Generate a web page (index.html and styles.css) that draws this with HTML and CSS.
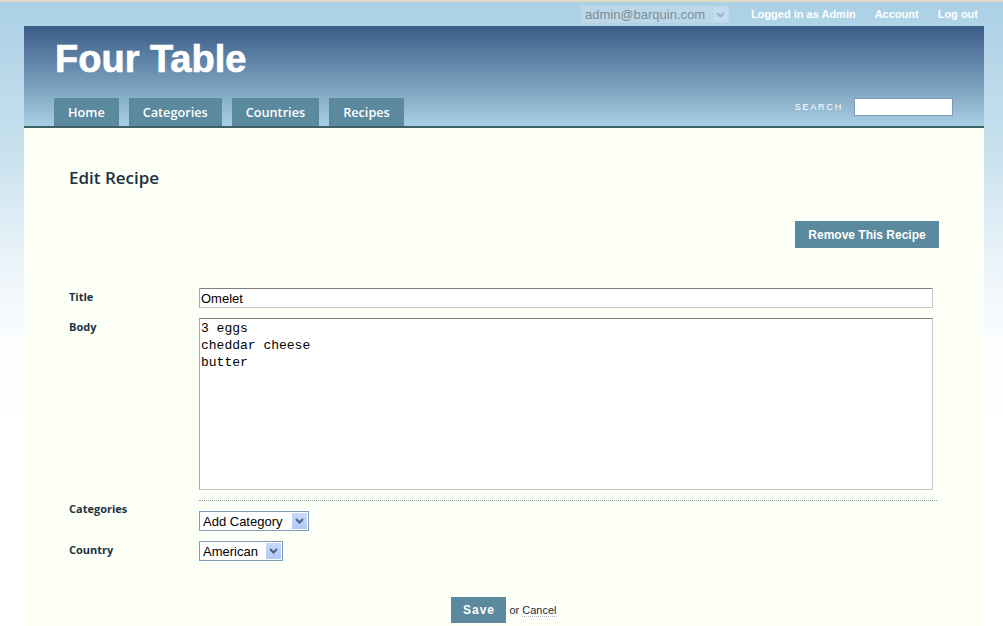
FILE: index.html
```html
<!DOCTYPE html>
<html>
<head>
<meta charset="utf-8">
<title>Four Table - Edit Recipe</title>
<link rel="stylesheet" href="styles.css">
</head>
<body>
<div class="page">
  <div class="topbar">
    <div class="select-wrap user-select">
      <select class="user-choice"><option>admin@barquin.com</option></select>
      <span class="arrow"><svg width="9" height="6" viewBox="0 0 9 6"><path d="M1 1 L4.5 4.5 L8 1" fill="none" stroke="#9fb3c8" stroke-width="2"/></svg></span>
    </div>
    <a class="toplink" href="#">Logged in as Admin</a>
    <a class="toplink" href="#">Account</a>
    <a class="toplink" href="#">Log out</a>
  </div>
  <div class="header">
    <h1 class="logo">Four Table</h1>
    <div class="navrow">
      <ul class="nav">
        <li><a href="#">Home</a></li>
        <li><a href="#">Categories</a></li>
        <li><a href="#">Countries</a></li>
        <li><a href="#">Recipes</a></li>
      </ul>
      <form class="search">
        <label class="search-label">SEARCH</label>
        <input class="search-input" type="text">
      </form>
    </div>
  </div>
  <div class="content">
    <h2 class="title">Edit Recipe</h2>
    <div class="actions">
      <button class="btn btn-remove">Remove This Recipe</button>
    </div>
    <form class="recipe-form">
      <div class="row">
        <label class="label">Title</label>
        <input class="text-input" type="text" value="Omelet">
      </div>
      <div class="row">
        <label class="label">Body</label>
        <textarea class="textarea">3 eggs
cheddar cheese
butter</textarea>
      </div>
      <div class="row row-sep">
        <label class="label">Categories</label>
        <div class="field">
          <div class="select-wrap form-select">
            <select class="choice cat"><option>Add Category</option></select>
            <span class="arrow"><svg width="9" height="6" viewBox="0 0 9 6"><path d="M1 1 L4.5 4.5 L8 1" fill="none" stroke="#4d6185" stroke-width="2"/></svg></span>
          </div>
        </div>
      </div>
      <div class="row row-country">
        <label class="label">Country</label>
        <div class="field">
          <div class="select-wrap form-select">
            <select class="choice country"><option>American</option></select>
            <span class="arrow"><svg width="9" height="6" viewBox="0 0 9 6"><path d="M1 1 L4.5 4.5 L8 1" fill="none" stroke="#4d6185" stroke-width="2"/></svg></span>
          </div>
        </div>
      </div>
      <div class="submit">
        <button class="btn btn-save">Save</button>
        <span class="or">or</span>
        <a class="cancel" href="#">Cancel</a>
      </div>
    </form>
  </div>
</div>
</body>
</html>
```

FILE: styles.css
```css
html, body {
  margin: 0;
  padding: 0;
}
body {
  border-top: 2px solid #e2dbc4;
  background: linear-gradient(to bottom, #aad0e5 0px, #c8e1ee 150px, #eaf3f9 260px, #fbfdff 340px, #ffffff 420px);
  min-height: 700px;
  font-family: "Liberation Sans", Arial, sans-serif;
}
.page {
  width: 960px;
  margin-left: 24px;
}
.topbar {
  height: 24px;
  display: flex;
  align-items: center;
  justify-content: flex-end;
  padding-right: 6px;
}
.select-wrap {
  position: relative;
  display: inline-block;
}
.user-select {
  margin-right: 21px;
  margin-top: 1px;
}
.user-choice {
  appearance: none;
  -webkit-appearance: none;
  width: 150px;
  height: 19px;
  border: 1px solid #b4d0e0;
  background: #bcd8e8;
  color: #7d8d9a;
  font-family: "Liberation Sans", Arial, sans-serif;
  font-size: 13px;
  padding: 0 0 0 4px;
  margin: 0;
  border-radius: 0;
}
.user-select .arrow {
  position: absolute;
  right: 2px;
  top: 2px;
  width: 14px;
  height: 15px;
  background: #c4dcef;
  display: flex;
  align-items: center;
  justify-content: center;
}
.toplink {
  color: #ffffff;
  font-size: 11px;
  font-weight: bold;
  text-decoration: none;
  margin-left: 19px;
}
.toplink:first-of-type {
  margin-left: 0;
}
.header {
  height: 100px;
  background: linear-gradient(to bottom, #3b5c87 0%, #6a8fb0 45%, #a8cfe3 100%);
  border-bottom: 2px solid #3d5e63;
  display: flex;
  flex-direction: column;
  justify-content: space-between;
}
.logo {
  margin: 0;
  padding: 13px 0 0 31px;
  color: #ffffff;
  font-family: "Liberation Sans", Arial, sans-serif;
  font-size: 38px;
  font-weight: bold;
  letter-spacing: 0;
  line-height: 40px;
  -webkit-text-stroke: 0.7px #ffffff;
}
.navrow {
  display: flex;
  align-items: flex-end;
  justify-content: space-between;
  padding-left: 30px;
  padding-right: 31px;
}
.nav {
  list-style: none;
  margin: 0;
  padding: 0;
  display: flex;
  gap: 10px;
}
.nav a {
  display: block;
  height: 28px;
  line-height: 29px;
  padding: 0 14px;
  background: #5b899d;
  color: #ffffff;
  font-family: "Open Sans", sans-serif;
  font-weight: 600;
  font-size: 12.7px;
  text-decoration: none;
}
.search {
  display: flex;
  align-items: center;
  margin: 0 0 10px 0;
}
.search-label {
  color: #ffffff;
  font-size: 9px;
  letter-spacing: 1.8px;
  margin-right: 11px;
}
.search-input {
  width: 97px;
  height: 16px;
  border: 1px solid #7b9db9;
  padding: 0;
  margin: 0;
  background: #ffffff;
}
.content {
  background: #fbfff5;
  padding: 40px 45px 60px 45px;
}
.title {
  margin: 0;
  font-family: "Open Sans", sans-serif;
  font-weight: 600;
  font-size: 17px;
  line-height: 20px;
  color: #1b3141;
}
.actions {
  display: flex;
  justify-content: flex-end;
  margin-top: 33px;
}
.btn {
  background: #5b899d;
  color: #ffffff;
  border: none;
  font-family: "Liberation Sans", Arial, sans-serif;
  font-weight: bold;
  font-size: 12px;
  height: 27px;
  padding: 0 13px;
  margin: 0;
  cursor: pointer;
}
.btn-remove {
  letter-spacing: 0;
  width: 144px;
  padding: 0;
}
.recipe-form {
  margin-top: 40px;
}
.row {
  display: flex;
  align-items: flex-start;
  margin-bottom: 10px;
}
.label {
  width: 130px;
  flex: none;
  font-family: "Open Sans", sans-serif;
  font-weight: 700;
  font-size: 11px;
  color: #1c3344;
  padding-top: 1px;
}
.text-input {
  width: 734px;
  height: 20px;
  box-sizing: border-box;
  border: 1px solid #c6c6c6;
  border-top-color: #7f7f7f;
  border-left-color: #a8a8a8;
  background: #ffffff;
  font-family: "Liberation Sans", Arial, sans-serif;
  font-size: 13px;
  padding: 1px 1px;
  margin: 0;
}
.textarea {
  width: 734px;
  height: 172px;
  box-sizing: border-box;
  border: 1px solid #c6c6c6;
  border-top-color: #7f7f7f;
  border-left-color: #a8a8a8;
  background: #ffffff;
  font-family: "Liberation Mono", "Courier New", monospace;
  font-size: 13px;
  line-height: 17px;
  padding: 1px 1px;
  margin: 0;
  resize: none;
  color: #000;
}
.row-sep {
  border-top: 1px dotted #8f9a94;
  margin-left: 130px;
  padding-top: 10px;
  width: 738px;
}
.row-sep .label {
  margin-left: -130px;
  margin-top: -11px;
}
.row-country .label {
  padding-top: 1px;
}
.form-select .arrow {
  position: absolute;
  right: 2px;
  top: 2px;
  width: 15px;
  height: 16px;
  background: linear-gradient(to bottom, #c9d8fb, #b1c8f6);
  display: flex;
  align-items: center;
  justify-content: center;
}
.choice {
  appearance: none;
  -webkit-appearance: none;
  height: 20px;
  border: 1px solid #7f9db9;
  background: #ffffff;
  font-family: "Liberation Sans", Arial, sans-serif;
  font-size: 13px;
  color: #000;
  padding: 0 0 0 3px;
  margin: 0;
  border-radius: 0;
}
.cat { width: 110px; }
.country { width: 84px; }
.submit {
  display: flex;
  align-items: center;
  justify-content: center;
  margin-top: 36px;
}
.btn-save {
  height: 26px;
  width: 55px;
  padding: 0;
  letter-spacing: 1px;
}
.or {
  font-size: 11px;
  color: #1c3344;
  margin-left: 3px;
  margin-right: 3px;
}
.cancel {
  font-size: 11px;
  color: #1c2a35;
  text-decoration: none;
  border-bottom: 1px dotted #b4b4c0;
  background: #ffffff;
}
```
